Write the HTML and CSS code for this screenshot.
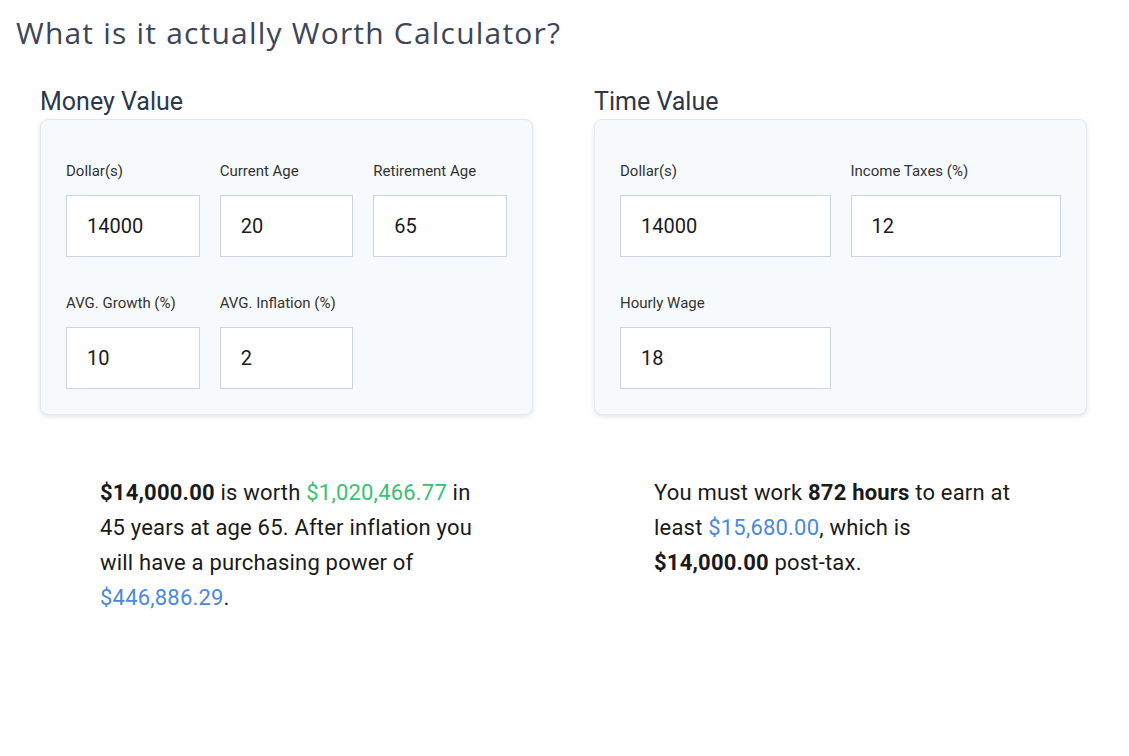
FILE: index.html
```html
<!DOCTYPE html>
<html>
  <head>
    <meta charset="utf-8">
    <title>What is it actually Worth Calculator?</title>
    <meta name="viewport" content="width=device-width, initial-scale=1">
    <link rel="stylesheet" href="styles.css">
  </head>
  <body>
    <h1 class="page-title">What is it actually Worth Calculator?</h1>

    <div class="calculators">
      <section class="calc">
        <h2 class="calc__title">Money Value</h2>
        <div class="card card--three">
          <label class="field">
            <span class="field__label">Dollar(s)</span>
            <input class="field__input" type="text" value="14000">
          </label>
          <label class="field">
            <span class="field__label">Current Age</span>
            <input class="field__input" type="text" value="20">
          </label>
          <label class="field">
            <span class="field__label">Retirement Age</span>
            <input class="field__input" type="text" value="65">
          </label>
          <label class="field">
            <span class="field__label">AVG. Growth (%)</span>
            <input class="field__input" type="text" value="10">
          </label>
          <label class="field">
            <span class="field__label">AVG. Inflation (%)</span>
            <input class="field__input" type="text" value="2">
          </label>
        </div>
        <p class="result">
          <strong>$14,000.00</strong> is worth <span class="is-green">$1,020,466.77</span> in
          45 years at age 65. After inflation you will have a purchasing power of
          <span class="is-blue">$446,886.29</span>.
        </p>
      </section>

      <section class="calc">
        <h2 class="calc__title">Time Value</h2>
        <div class="card card--two">
          <label class="field">
            <span class="field__label">Dollar(s)</span>
            <input class="field__input" type="text" value="14000">
          </label>
          <label class="field">
            <span class="field__label">Income Taxes (%)</span>
            <input class="field__input" type="text" value="12">
          </label>
          <label class="field">
            <span class="field__label">Hourly Wage</span>
            <input class="field__input" type="text" value="18">
          </label>
        </div>
        <p class="result">
          You must work <strong>872 hours</strong> to earn at least
          <span class="is-blue">$15,680.00</span>, which is
          <strong>$14,000.00</strong> post-tax.
        </p>
      </section>
    </div>
  </body>
</html>
```

FILE: styles.css
```css
/* Base */
* {
  box-sizing: border-box;
}

html {
  font-family: Roboto, "Liberation Sans", sans-serif;
}

body {
  background: #fff;
  color: #1a1a1a;
  margin: 0;
  min-width: 1129px;
}

/* Modules */
.page-title {
  color: #3d4557;
  font-family: "Open Sans", sans-serif;
  font-size: 30px;
  font-weight: 400;
  letter-spacing: 1.2px;
  line-height: 36px;
  margin: 0;
  padding: 15px 0 0 16px;
}

.calculators {
  display: grid;
  gap: 61px;
  grid-template-columns: 493px 493px;
  padding: 0 0 0 40px;
}

.calc__title {
  color: #2d3748;
  font-size: 25px;
  font-weight: 400;
  line-height: 30px;
  margin: 36px 0 2px;
}

.card {
  background: #f7fafc;
  border: 1px solid #e2e8f0;
  border-radius: 8px;
  box-shadow: 0 2px 5px rgba(0,0,0,0.1);
  column-gap: 20px;
  display: grid;
  padding: 41px 25px 25px;
  row-gap: 36px;
}
.card--three {
  grid-template-columns: repeat(3, 1fr);
}
.card--two {
  grid-template-columns: repeat(2, 1fr);
}

.field {
  display: block;
}
.field__label {
  color: #333;
  display: block;
  font-size: 15px;
  line-height: 20px;
  margin-bottom: 14px;
}
.field__input {
  background: #fff;
  border: 1px solid #cbd5e0;
  border-radius: 0;
  color: #1a1a1a;
  display: block;
  font-family: Roboto, sans-serif;
  font-size: 20px;
  height: 62px;
  padding: 0 20px;
  width: 100%;
}

.result {
  font-size: 22px;
  letter-spacing: 0.2px;
  line-height: 35px;
  margin: 60px 0 0;
  padding: 0 60px;
}
.result strong {
  font-weight: 700;
}

/* State */
.is-green {
  color: #38c172;
}
.is-blue {
  color: #4a89dc;
}
```
